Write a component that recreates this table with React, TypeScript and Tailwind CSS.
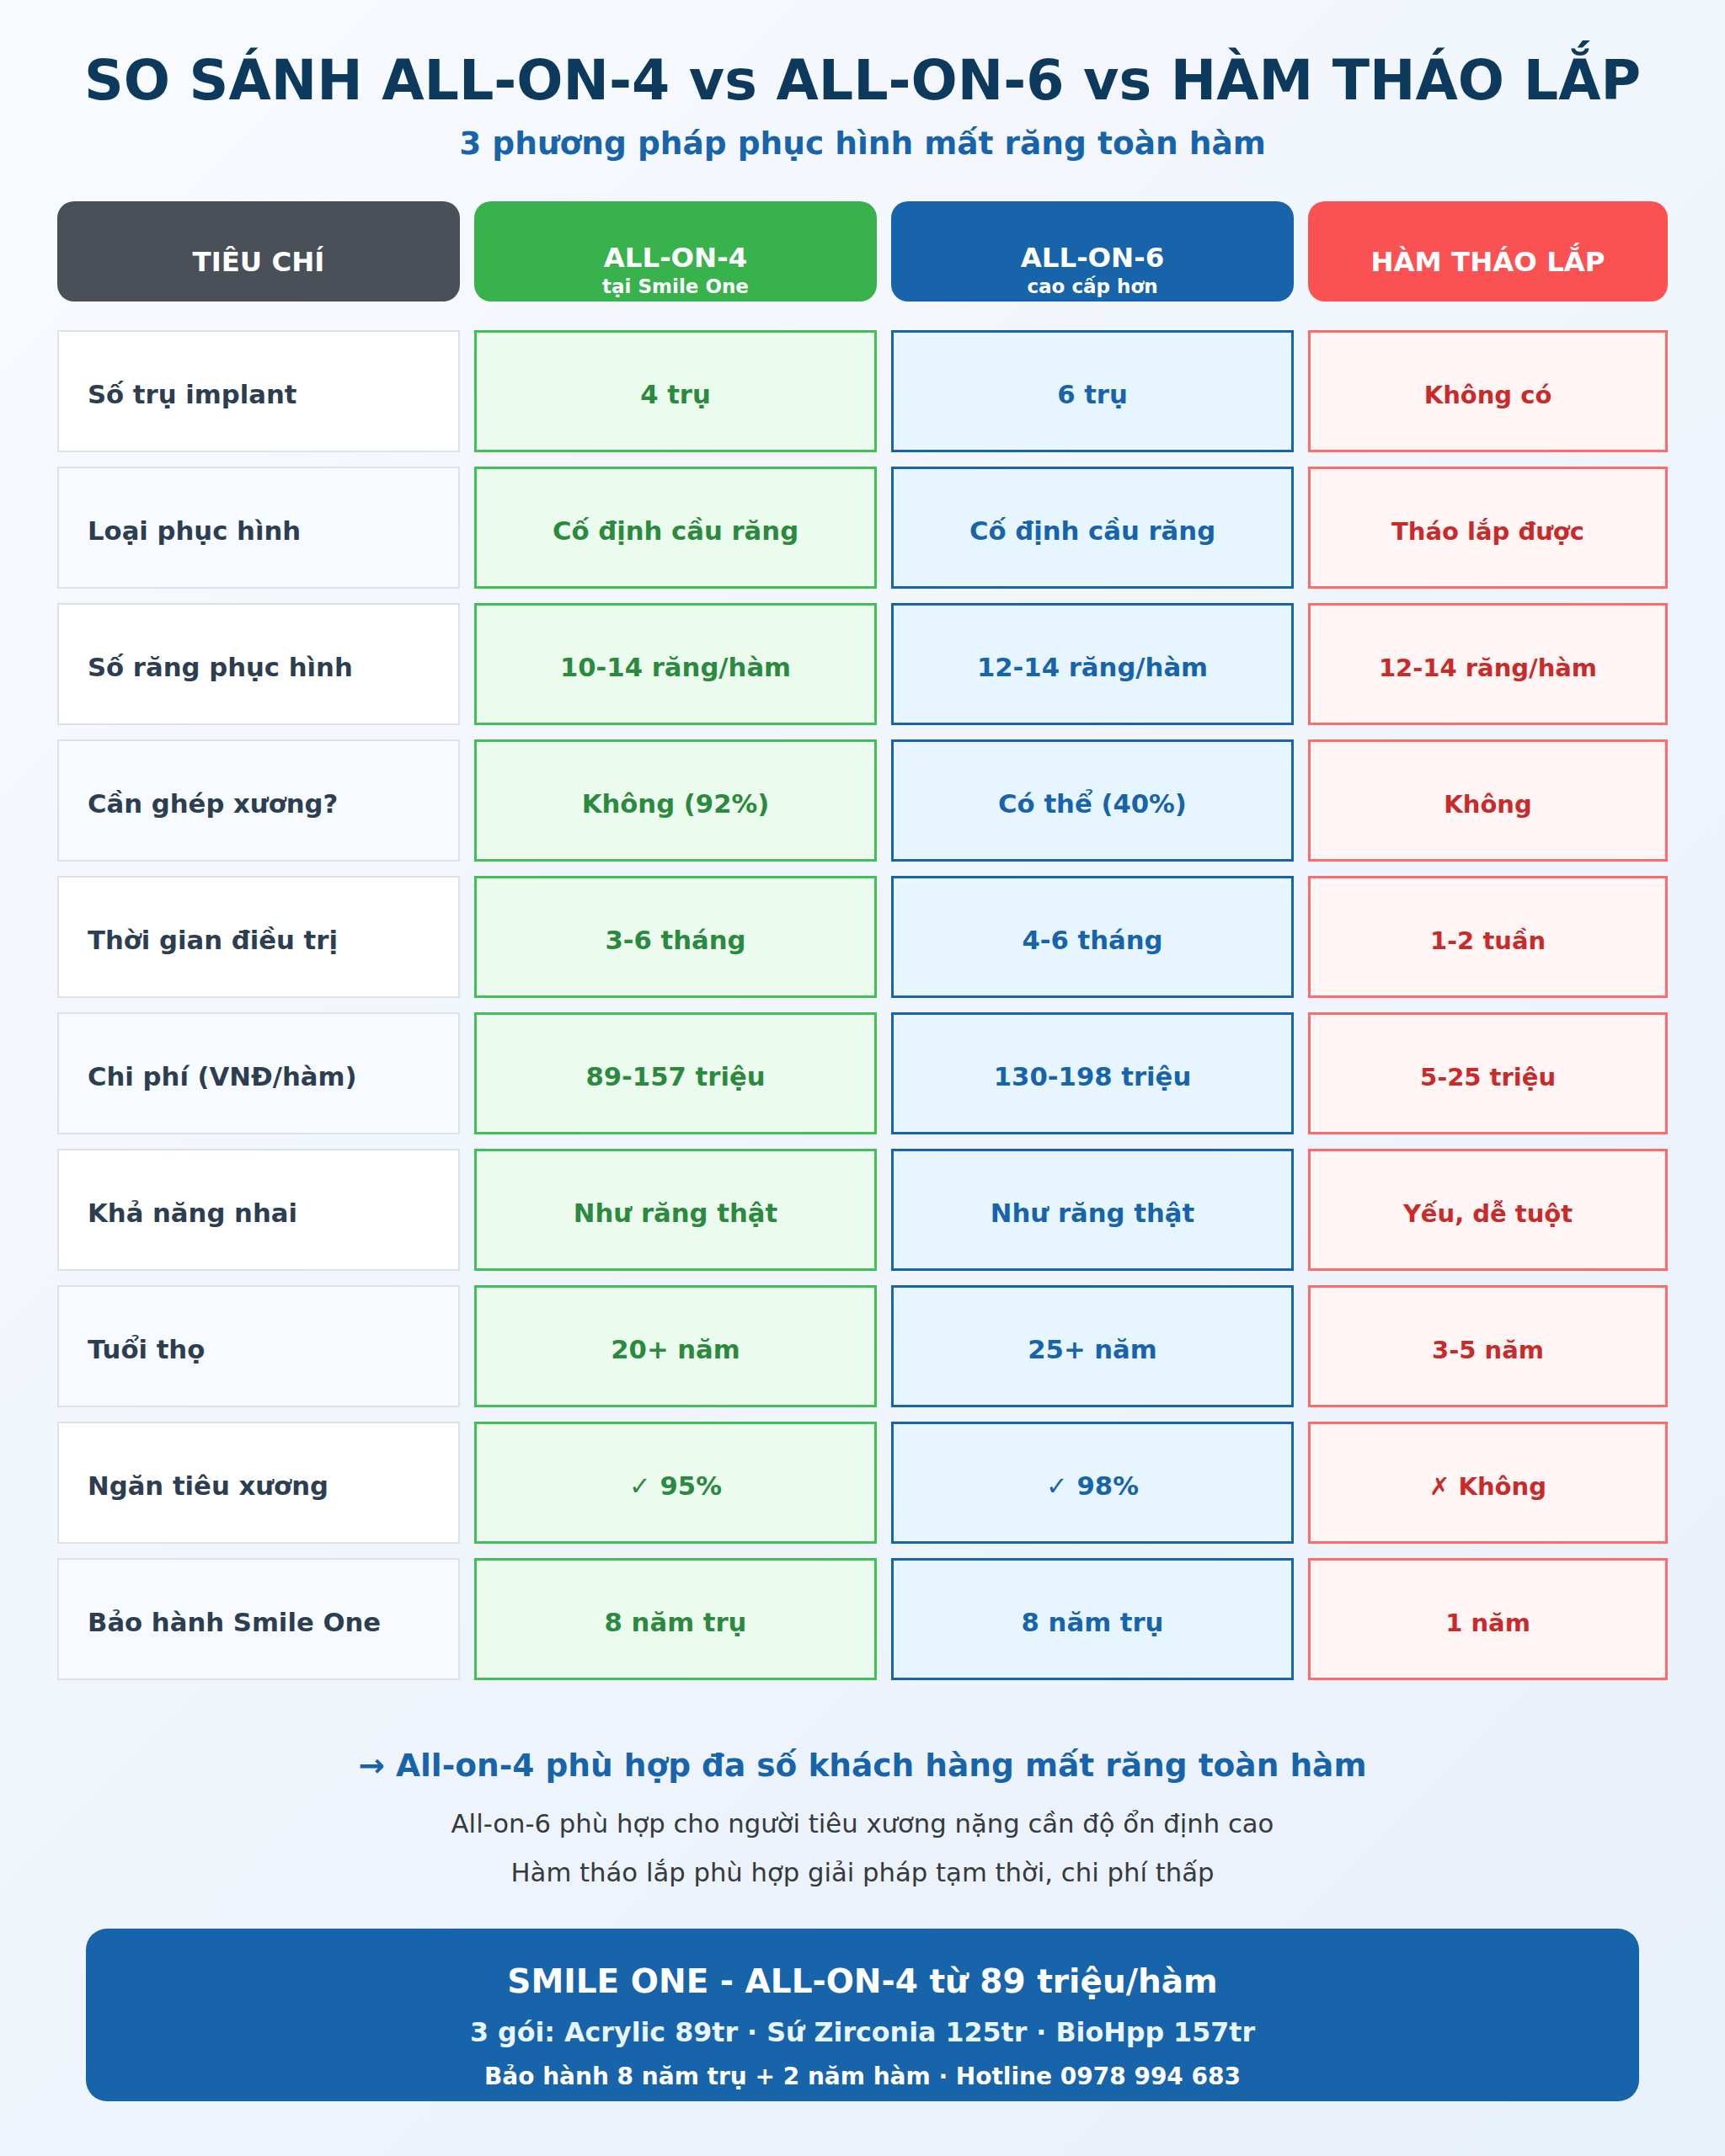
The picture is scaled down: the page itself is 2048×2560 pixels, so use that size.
import React from "react";

type Row = {
  label: string;
  a4: string;
  a6: string;
  denture: string;
};

const rows: Row[] = [
  { label: "Số trụ implant", a4: "4 trụ", a6: "6 trụ", denture: "Không có" },
  { label: "Loại phục hình", a4: "Cố định cầu răng", a6: "Cố định cầu răng", denture: "Tháo lắp được" },
  { label: "Số răng phục hình", a4: "10-14 răng/hàm", a6: "12-14 răng/hàm", denture: "12-14 răng/hàm" },
  { label: "Cần ghép xương?", a4: "Không (92%)", a6: "Có thể (40%)", denture: "Không" },
  { label: "Thời gian điều trị", a4: "3-6 tháng", a6: "4-6 tháng", denture: "1-2 tuần" },
  { label: "Chi phí (VNĐ/hàm)", a4: "89-157 triệu", a6: "130-198 triệu", denture: "5-25 triệu" },
  { label: "Khả năng nhai", a4: "Như răng thật", a6: "Như răng thật", denture: "Yếu, dễ tuột" },
  { label: "Tuổi thọ", a4: "20+ năm", a6: "25+ năm", denture: "3-5 năm" },
  { label: "Ngăn tiêu xương", a4: "✓ 95%", a6: "✓ 98%", denture: "✗ Không" },
  { label: "Bảo hành Smile One", a4: "8 năm trụ", a6: "8 năm trụ", denture: "1 năm" },
];

function HeaderCell({ title, sub, className }: { title: string; sub?: string; className: string }) {
  return (
    <div className={`h-[119px] rounded-[20px] flex flex-col items-center text-white font-bold ${sub ? "pt-[51.5px]" : "pt-[56.5px]"} ${className}`}>
      <div className="text-[32.4px] leading-none">{title}</div>
      {sub && <div className="mt-[6.5px] text-[23px] leading-none">{sub}</div>}
    </div>
  );
}

export default function App() {
  return (
    <div className="w-[2048px] h-[2560px] font-['DejaVu_Sans',sans-serif] bg-[linear-gradient(135deg,#f8fbff_0%,#f0f5fc_50%,#e8f0fa_100%)] flex flex-col">
      <h1 className="mt-[63px] text-center text-[65px] leading-none font-bold text-[#0d3a5c]">
        SO SÁNH ALL-ON-4 vs ALL-ON-6 vs HÀM THÁO LẮP
      </h1>
      <p className="mt-[24px] text-center text-[37.5px] leading-none font-bold text-[#1864ab]">
        3 phương pháp phục hình mất răng toàn hàm
      </p>

      <div className="mt-[49px] mx-[68px] grid grid-cols-[478px_478px_478px_427px] gap-x-[17px]">
        <HeaderCell title="TIÊU CHÍ" className="bg-[#495057]" />
        <HeaderCell title="ALL-ON-4" sub="tại Smile One" className="bg-[#37b24d]" />
        <HeaderCell title="ALL-ON-6" sub="cao cấp hơn" className="bg-[#1864ab]" />
        <HeaderCell title="HÀM THÁO LẮP" className="bg-[#fa5252]" />
      </div>

      <div className="mt-[34px] mx-[68px] grid grid-cols-[478px_478px_478px_427px] gap-x-[17px] gap-y-[17.07px] font-bold leading-none">
        {rows.map((r, i) => (
          <React.Fragment key={r.label}>
            <div className={`h-[145px] border-2 border-[#dee2e6] flex items-center pt-[10px] pl-[34px] text-[30.7px] text-[#2c3e50] ${i % 2 === 0 ? "bg-white" : "bg-[#f7faff]"}`}>
              {r.label}
            </div>
            <div className="h-[145px] border-[3px] border-[#40c057] bg-[#ebfbee] flex items-center justify-center pt-[10px] text-[30.7px] text-[#2b8a3e]">
              {r.a4}
            </div>
            <div className="h-[145px] border-[3px] border-[#1864ab] bg-[#e7f5ff] flex items-center justify-center pt-[10px] text-[30.7px] text-[#1864ab]">
              {r.a6}
            </div>
            <div className="h-[145px] border-[3px] border-[#ff6b6b] bg-[#fff5f5] flex items-center justify-center pt-[10px] text-[29px] text-[#c92a2a]">
              {r.denture}
            </div>
          </React.Fragment>
        ))}
      </div>

      <p className="mt-[83px] text-center text-[37.5px] leading-none font-bold text-[#1864ab]">
        → All-on-4 phù hợp đa số khách hàng mất răng toàn hàm
      </p>
      <p className="mt-[35px] text-center text-[30.7px] leading-none text-[#343a40]">
        All-on-6 phù hợp cho người tiêu xương nặng cần độ ổn định cao
      </p>
      <p className="mt-[28px] text-center text-[30.7px] leading-none text-[#343a40]">
        Hàm tháo lắp phù hợp giải pháp tạm thời, chi phí thấp
      </p>

      <div className="mt-[50px] mx-[102px] h-[205px] rounded-[25px] bg-[#1864ab] flex flex-col items-center pt-[43px] font-bold text-white">
        <div className="text-[39px] leading-none">SMILE ONE - ALL-ON-4 từ 89 triệu/hàm</div>
        <div className="mt-[26px] text-[31.7px] leading-none text-[#e7f5ff]">
          3 gói: Acrylic 89tr · Sứ Zirconia 125tr · BioHpp 157tr
        </div>
        <div className="mt-[22.5px] text-[28px] leading-none">
          Bảo hành 8 năm trụ + 2 năm hàm · Hotline 0978 994 683
        </div>
      </div>
    </div>
  );
}
